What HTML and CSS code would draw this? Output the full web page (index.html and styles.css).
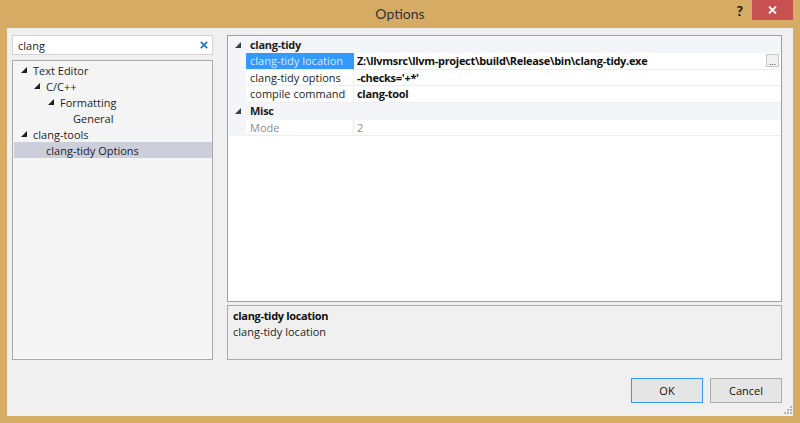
FILE: index.html
```html
<!DOCTYPE html>
<html>
<head>
<meta charset="utf-8">
<link rel="stylesheet" href="styles.css">
</head>
<body>
<div class="window">
  <div class="titlebar">
    <div></div>
    <div class="title">Options</div>
    <div class="controls">
      <span class="help">?</span>
      <span class="close"><svg width="9" height="8" viewBox="0 0 9 8"><path d="M1 0.5 L8 7.5 M8 0.5 L1 7.5" stroke="#fff" stroke-width="1.8"/></svg></span>
    </div>
  </div>
  <div class="client">
    <div class="main">
      <div class="leftcol">
        <div class="search">
          <span class="search-text">clang</span>
          <svg class="search-x" width="8" height="8" viewBox="0 0 8 8"><path d="M0.8 0.8 L7.2 7.2 M7.2 0.8 L0.8 7.2" stroke="#1c74c9" stroke-width="1.7"/></svg>
        </div>
        <div class="tree">
          <div class="trow l0"><svg class="tri" width="6" height="6" viewBox="0 0 6 6"><polygon points="6,0 6,6 0,6" fill="#1e1e1e"/></svg><span>Text Editor</span></div>
          <div class="trow l1"><svg class="tri" width="6" height="6" viewBox="0 0 6 6"><polygon points="6,0 6,6 0,6" fill="#1e1e1e"/></svg><span>C/C++</span></div>
          <div class="trow l2"><svg class="tri" width="6" height="6" viewBox="0 0 6 6"><polygon points="6,0 6,6 0,6" fill="#1e1e1e"/></svg><span>Formatting</span></div>
          <div class="trow l3"><span>General</span></div>
          <div class="trow l0"><svg class="tri" width="6" height="6" viewBox="0 0 6 6"><polygon points="6,0 6,6 0,6" fill="#1e1e1e"/></svg><span>clang-tools</span></div>
          <div class="trow l1 sel"><span class="notri"></span><span>clang-tidy Options</span></div>
        </div>
      </div>
      <div class="rightcol">
        <div class="grid">
          <div class="prow cat">
            <div class="gut"><svg width="6" height="6" viewBox="0 0 6 6"><polygon points="6,0 6,6 0,6" fill="#3c3c3c"/></svg></div>
            <div class="pcat">clang-tidy</div>
          </div>
          <div class="prow">
            <div class="gut"></div>
            <div class="pname selname">clang-tidy location</div>
            <div class="pval bold">Z:\llvmsrc\llvm-project\build\Release\bin\clang-tidy.exe<span class="dots">...</span></div>
          </div>
          <div class="prow">
            <div class="gut"></div>
            <div class="pname">clang-tidy options</div>
            <div class="pval bold">-checks='+*'</div>
          </div>
          <div class="prow">
            <div class="gut"></div>
            <div class="pname">compile command</div>
            <div class="pval bold">clang-tool</div>
          </div>
          <div class="prow cat">
            <div class="gut"><svg width="6" height="6" viewBox="0 0 6 6"><polygon points="6,0 6,6 0,6" fill="#3c3c3c"/></svg></div>
            <div class="pcat">Misc</div>
          </div>
          <div class="prow">
            <div class="gut"></div>
            <div class="pname ro">Mode</div>
            <div class="pval ro">2</div>
          </div>
        </div>
        <div class="desc">
          <div class="desc-title">clang-tidy location</div>
          <div class="desc-text">clang-tidy location</div>
        </div>
      </div>
    </div>
    <div class="buttons">
      <button class="btn default">OK</button>
      <button class="btn">Cancel</button>
    </div>
    <svg class="grip" width="8" height="8" viewBox="0 0 8 8"><g fill="#b4b4b4"><rect x="6" y="0" width="2" height="2"/><rect x="3" y="3" width="2" height="2"/><rect x="6" y="3" width="2" height="2"/><rect x="0" y="6" width="2" height="2"/><rect x="3" y="6" width="2" height="2"/><rect x="6" y="6" width="2" height="2"/></g></svg>
  </div>
</div>
</body>
</html>
```

FILE: styles.css
```css
html, body {
  margin: 0;
  padding: 0;
}
body {
  background: #d6ab64;
  font-family: "Open Sans", "Noto Sans", sans-serif;
  font-size: 11px;
  color: #1e1e1e;
}
.window {
  width: 800px;
  height: 423px;
  display: flex;
  flex-direction: column;
  background: #d6ab64;
}
.titlebar {
  height: 28px;
  flex: none;
  display: grid;
  grid-template-columns: 1fr auto 1fr;
}
.title {
  font-family: Lato, "Open Sans", sans-serif;
  font-size: 14px;
  color: #333;
  line-height: 28px;
}
.controls {
  display: flex;
  justify-content: flex-end;
  align-items: flex-start;
  padding-right: 7px;
}
.help {
  font-family: Lato, sans-serif;
  font-weight: bold;
  font-size: 14px;
  color: #111;
  margin-right: 9px;
  margin-top: 3px;
  line-height: 16px;
}
.close {
  width: 41px;
  height: 20px;
  background: #c75050;
  display: flex;
  align-items: center;
  justify-content: center;
}
.client {
  flex: 1;
  margin: 0 7px 7px 7px;
  background: #f0f0f0;
  display: flex;
  flex-direction: column;
  padding: 7px 11px 13px 5px;
  position: relative;
}
.main {
  height: 325px;
  display: flex;
  gap: 14px;
}
.leftcol {
  width: 201px;
  display: flex;
  flex-direction: column;
  gap: 5px;
}
.search {
  height: 20px;
  box-sizing: border-box;
  background: #fff;
  border: 1px solid #d4d4d4;
  display: flex;
  align-items: center;
  justify-content: space-between;
  padding: 0 4px 0 5px;
}
.search-text {
  color: #1e1e1e;
}
.tree {
  flex: 1;
  background: #f5f5f5;
  border: 1px solid #a9a9a9;
  padding: 1px 0 1px 1px;
}
.trow {
  height: 16px;
  display: flex;
  align-items: center;
}
.trow .tri, .trow .notri {
  width: 6px;
  height: 6px;
  flex: none;
  margin-right: 6px;
}
.trow.l0 { padding-left: 7px; }
.trow.l1 { padding-left: 20px; }
.trow.l2 { padding-left: 34px; }
.trow.l3 { padding-left: 59px; }
.trow.sel {
  background: #cccedb;
}
.rightcol {
  flex: 1;
  display: flex;
  flex-direction: column;
  gap: 3px;
}
.grid {
  flex: 1;
  background: #fff;
  border: 1px solid #a0a0a0;
}
.prow {
  display: flex;
  height: 16.5px;
}
.prow.cat {
  height: 17px;
}
.gut {
  width: 18px;
  flex: none;
  background: #f3f5f9;
  display: flex;
  align-items: center;
  justify-content: center;
  padding-left: 2px;
  box-sizing: border-box;
}
.pcat {
  flex: 1;
  background: #f3f5f9;
  font-weight: bold;
  letter-spacing: -0.3px;
  padding-left: 4px;
  display: flex;
  align-items: center;
  border-bottom: 1px solid #f3f5f9;
}
.pname {
  width: 108px;
  flex: none;
  box-sizing: border-box;
  padding-left: 4px;
  border-bottom: 1px solid #eeeeee;
  border-right: 1px solid #eeeeee;
  display: flex;
  align-items: center;
  white-space: nowrap;
}
.pname.selname {
  background: #3399ff;
  color: #d6e8fc;
  border-right-color: #3399ff;
}
.pval {
  flex: 1;
  padding-left: 3px;
  border-bottom: 1px solid #eeeeee;
  display: flex;
  align-items: center;
  white-space: nowrap;
}
.bold {
  font-weight: bold;
  letter-spacing: -0.3px;
  color: #111;
}
.ro {
  color: #8d8d8d;
}
.dots {
  margin-left: auto;
  margin-right: 2px;
  width: 13px;
  height: 13px;
  box-sizing: border-box;
  border: 1px solid #c6c6c6;
  background: #f0f0f0;
  font-size: 9px;
  font-weight: normal;
  letter-spacing: 0;
  line-height: 13px;
  text-align: center;
  color: #333;
}
.desc {
  height: 55px;
  box-sizing: border-box;
  background: #f0f0f0;
  border: 1px solid #acacac;
  padding: 2px 5px;
}
.desc-title {
  font-weight: bold;
  letter-spacing: -0.33px;
  line-height: 16px;
  color: #111;
}
.desc-text {
  line-height: 16px;
}
.buttons {
  margin-top: 18px;
  display: flex;
  justify-content: flex-end;
  gap: 7px;
}
.btn {
  width: 72px;
  height: 25px;
  border: 1px solid #adadad;
  background: #e5e5e5;
  font-family: "Open Sans", "Noto Sans", sans-serif;
  font-size: 11px;
  color: #111;
  padding: 0;
  margin: 0;
}
.btn.default {
  border-color: #3399ff;
}
.grip {
  position: absolute;
  right: 1px;
  bottom: 2px;
}
```
